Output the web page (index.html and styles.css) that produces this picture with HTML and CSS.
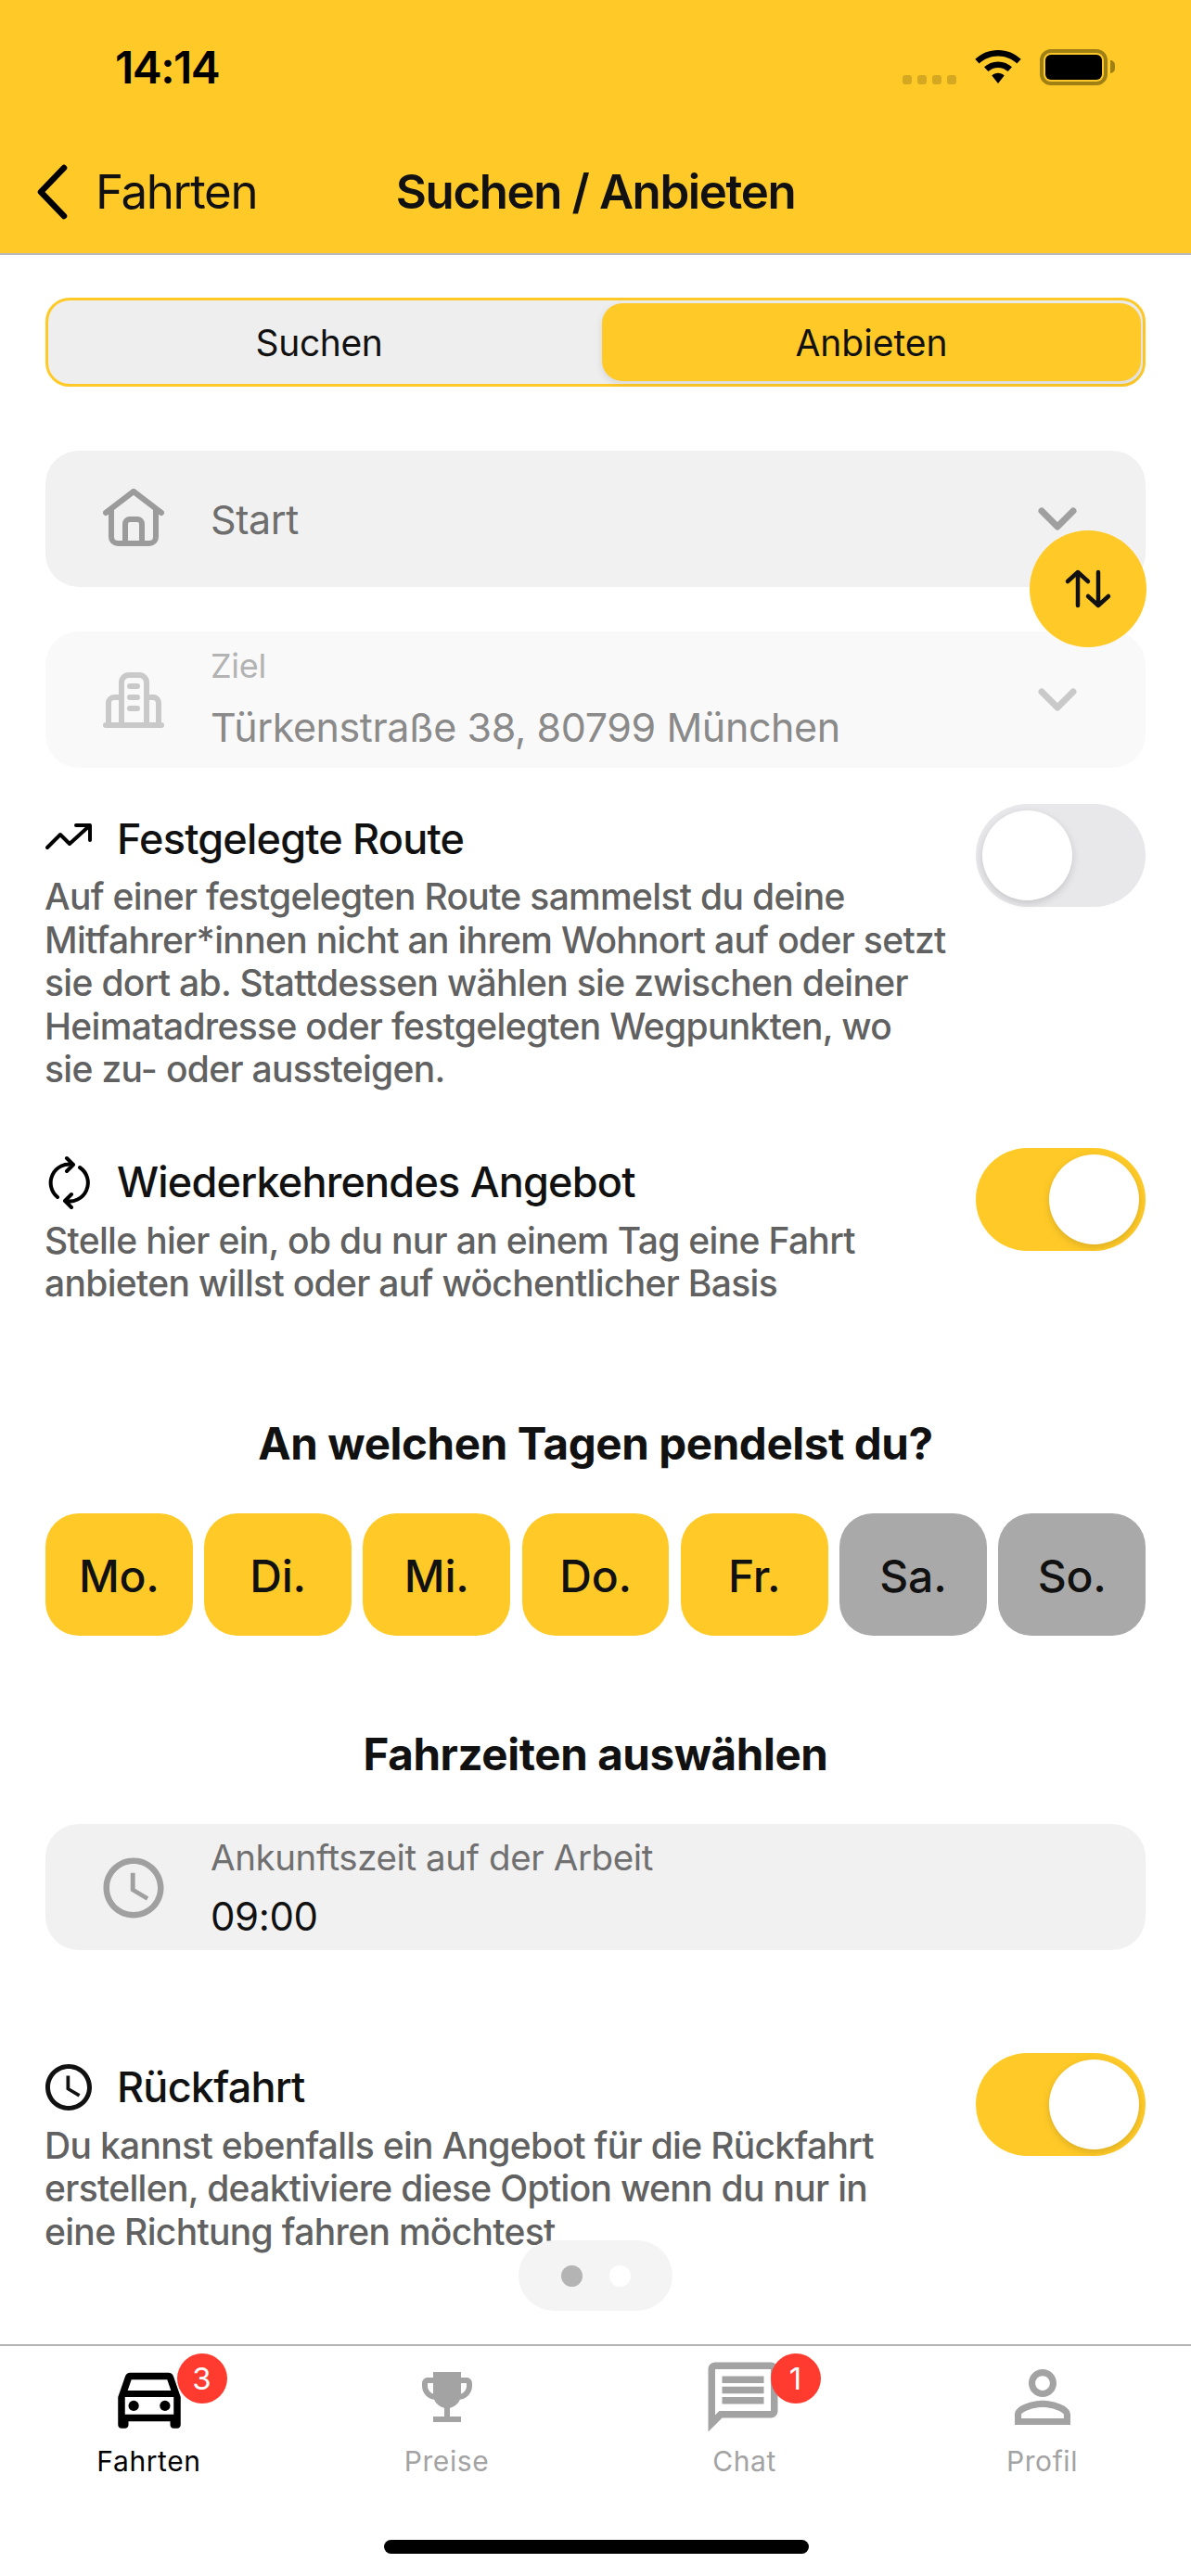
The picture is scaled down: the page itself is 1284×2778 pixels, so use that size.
FILE: index.html
```html
<!DOCTYPE html>
<html lang="de">
<head>
    <meta charset="UTF-8">
    <meta name="viewport" content="width=device-width, initial-scale=1.0">
    <title>Suchen / Anbieten</title>
    <link rel="stylesheet" href="styles.css">
</head>
<body>
    <header class="header">
        <div class="status-bar">
            <span class="clock">14:14</span>
            <div class="status-icons">
                <div class="signal"><i></i><i></i><i></i><i></i></div>
                <svg class="wifi" viewBox="0 0 50 36"><path d="M25 0C15.500 0 6.800 3.700 0.300 9.800L4.600 14.500C9.900 9.500 17.100 6.400 25 6.400S40.100 9.500 45.400 14.500L49.700 9.800C43.200 3.700 34.500 0 25 0ZM25 12.400C19.200 12.400 14 14.700 10 18.300L14.400 23C17.200 20.500 20.900 18.900 25 18.900S32.800 20.500 35.600 23L40 18.300C36 14.700 30.800 12.400 25 12.400ZM25 24.800C22.400 24.800 20.100 25.800 18.300 27.400L25 36L31.700 27.400C29.900 25.800 27.600 24.800 25 24.800Z"/></svg>
                <div class="battery"><div class="battery-level"></div></div>
                <div class="battery-tip"></div>
            </div>
        </div>
        <nav class="nav-bar">
            <div class="nav-back">
                <svg class="chevron-left" viewBox="0 0 36 60"><path d="M31 4 6 30l25 26"/></svg>
                <span>Fahrten</span>
            </div>
            <h1 class="nav-title">Suchen / Anbieten</h1>
        </nav>
    </header>

    <main class="content">
        <div class="segment">
            <div class="segment-item">Suchen</div>
            <div class="segment-item active">Anbieten</div>
        </div>

        <div class="route-fields">
            <div class="field">
                <svg class="field-icon" viewBox="0 0 66 66"><path d="M3 26 33 3l30 23M9 22v30a7 7 0 0 0 7 7h34a7 7 0 0 0 7-7V22M24 59V38a5 5 0 0 1 5-5h8a5 5 0 0 1 5 5v21"/></svg>
                <div class="field-text"><span class="field-value muted">Start</span></div>
                <svg class="chevron-down" viewBox="0 0 42 26"><path d="M4 4l17 17L38 4"/></svg>
            </div>
            <div class="field disabled">
                <svg class="field-icon" viewBox="0 0 66 66"><path d="M3 60h60M20 60V14a8 8 0 0 1 8-8h11a8 8 0 0 1 8 8v46M6 60V36a6 6 0 0 1 6-6h8M47 30h8a6 6 0 0 1 5 6v24M29 18h8M29 30h8M29 42h8"/></svg>
                <div class="field-text">
                    <span class="field-label">Ziel</span>
                    <span class="field-value">Türkenstraße 38, 80799 München</span>
                </div>
                <svg class="chevron-down" viewBox="0 0 42 26"><path d="M4 4l17 17L38 4"/></svg>
            </div>
            <button class="swap-button">
                <svg viewBox="0 0 60 60"><path d="M19 48V12M8 22l11-10 11 10M41 12v36M30 38l11 10 11-10"/></svg>
            </button>
        </div>

        <section class="option first">
            <div class="option-text">
                <div class="option-title">
                    <svg class="line-icon" viewBox="0 0 60 60"><path d="M7 40l14-14 10 10 22-20M38 16h15v16"/></svg>
                    <span>Festgelegte Route</span>
                </div>
                <p>Auf einer festgelegten Route sammelst du deine<br>Mitfahrer*innen nicht an ihrem Wohnort auf oder setzt<br>sie dort ab. Stattdessen wählen sie zwischen deiner<br>Heimatadresse oder festgelegten Wegpunkten, wo<br>sie zu- oder aussteigen.</p>
            </div>
            <div class="toggle"><div class="toggle-knob"></div></div>
        </section>

        <section class="option second">
            <div class="option-text">
                <div class="option-title">
                    <svg class="line-icon" viewBox="0 0 60 60"><path d="M35 11A20 20 0 0 0 18 46M28 4l7 7-7 7M26 50A20 20 0 0 0 42 14M33 43l-7 7 7 7"/></svg>
                    <span>Wiederkehrendes Angebot</span>
                </div>
                <p>Stelle hier ein, ob du nur an einem Tag eine Fahrt<br>anbieten willst oder auf wöchentlicher Basis</p>
            </div>
            <div class="toggle on"><div class="toggle-knob"></div></div>
        </section>

        <h2 class="section-title days-title">An welchen Tagen pendelst du?</h2>
        <div class="days">
            <div class="day">Mo.</div>
            <div class="day">Di.</div>
            <div class="day">Mi.</div>
            <div class="day">Do.</div>
            <div class="day">Fr.</div>
            <div class="day off">Sa.</div>
            <div class="day off">So.</div>
        </div>

        <h2 class="section-title times-title">Fahrzeiten auswählen</h2>
        <div class="field time-field">
            <svg class="clock-icon" viewBox="0 0 24 24"><path d="M11.990 2C6.470 2 2 6.480 2 12s4.470 10 9.990 10C17.520 22 22 17.520 22 12S17.520 2 11.990 2zM12 20c-4.420 0-8-3.580-8-8s3.580-8 8-8 8 3.580 8 8-3.580 8-8 8zm.500-13H11v6l5.250 3.150.750-1.230-4.500-2.670z"/></svg>
            <div class="field-text">
                <span class="time-label">Ankunftszeit auf der Arbeit</span>
                <span class="time-value">09:00</span>
            </div>
        </div>

        <section class="option third">
            <div class="option-text">
                <div class="option-title">
                    <svg viewBox="0 0 24 24"><path d="M11.990 2C6.470 2 2 6.480 2 12s4.470 10 9.990 10C17.520 22 22 17.520 22 12S17.520 2 11.990 2zM12 20c-4.420 0-8-3.580-8-8s3.580-8 8-8 8 3.580 8 8-3.580 8-8 8zm.500-13H11v6l5.250 3.150.750-1.230-4.500-2.670z"/></svg>
                    <span>Rückfahrt</span>
                </div>
                <p>Du kannst ebenfalls ein Angebot für die Rückfahrt<br>erstellen, deaktiviere diese Option wenn du nur in<br>eine Richtung fahren möchtest</p>
            </div>
            <div class="toggle on"><div class="toggle-knob"></div></div>
        </section>

        <div class="pager"><i class="current"></i><i></i></div>
    </main>

    <footer class="tab-bar">
        <div class="tab active">
            <div class="tab-icon">
                <svg class="car" viewBox="0 0 24 24"><path d="M18.920 6.010C18.720 5.420 18.160 5 17.500 5h-11c-.660 0-1.210.420-1.420 1.010L3 12v8c0 .550.450 1 1 1h1c.550 0 1-.450 1-1v-1h12v1c0 .550.450 1 1 1h1c.550 0 1-.450 1-1v-8l-2.080-5.990zM6.850 7h10.290l1.080 3.110H5.770L6.850 7zM19 17H5v-5h14v5z"/><circle cx="7.500" cy="14.500" r="1.500"/><circle cx="16.500" cy="14.500" r="1.500"/></svg>
                <span class="badge">3</span>
            </div>
            <span>Fahrten</span>
        </div>
        <div class="tab">
            <div class="tab-icon">
                <svg class="trophy" viewBox="0 0 24 24"><path d="M19 5h-2V3H7v2H5c-1.100 0-2 .900-2 2v1c0 2.550 1.920 4.630 4.390 4.940.630 1.500 1.980 2.630 3.610 2.960V19H7v2h10v-2h-4v-3.100c1.630-.330 2.980-1.460 3.610-2.960C19.080 12.630 21 10.550 21 8V7c0-1.100-.900-2-2-2zM5 8V7h2v3.820C5.840 10.400 5 9.300 5 8zm14 0c0 1.300-.840 2.400-2 2.820V7h2v1z"/></svg>
            </div>
            <span>Preise</span>
        </div>
        <div class="tab">
            <div class="tab-icon">
                <svg class="chat" viewBox="0 0 24 24"><path d="M20 2H4c-1.100 0-2 .900-2 2v18l4-4h14c1.100 0 2-.900 2-2V4c0-1.100-.900-2-2-2zm0 14H5.170L4 17.170V4h16v12zM6 12h12v2H6zm0-3h12v2H6zm0-3h12v2H6z"/></svg>
                <span class="badge chat-badge">1</span>
            </div>
            <span>Chat</span>
        </div>
        <div class="tab">
            <div class="tab-icon">
                <svg viewBox="0 0 24 24"><path d="M12 5.900c1.160 0 2.100.940 2.100 2.100s-.940 2.100-2.100 2.100S9.900 9.160 9.900 8s.940-2.100 2.100-2.100m0 9c2.970 0 6.100 1.460 6.100 2.100v1.100H5.900V17c0-.640 3.130-2.100 6.100-2.100M12 4C9.790 4 8 5.790 8 8s1.790 4 4 4 4-1.790 4-4-1.790-4-4-4zm0 9c-2.670 0-8 1.340-8 4v3h16v-3c0-2.660-5.330-4-8-4z"/></svg>
            </div>
            <span>Profil</span>
        </div>
        <div class="home-bar"></div>
    </footer>
</body>
</html>
```
FILE: styles.css
```css
body {
    font-family: Inter, "Liberation Sans", sans-serif;
    background-color: #fff;
    color: #111;
    margin: 0;
    padding: 0;
    width: 1284px;
    height: 2778px;
    display: flex;
    flex-direction: column;
    overflow: hidden;
}
h1, h2, p {
    margin: 0;
}

/* header */
.header {
    height: 273px;
    flex: none;
    background-color: #ffca28;
    border-bottom: 2px solid #b9b9b9;
}
.status-bar {
    height: 144px;
    display: flex;
    align-items: center;
    justify-content: space-between;
}
.clock {
    margin-left: 124px;
    font-size: 48px;
    font-weight: 600;
    letter-spacing: -1.5px;
    color: #000;
}
.status-icons {
    display: flex;
    align-items: center;
    margin-right: 82px;
}
.signal {
    display: flex;
    gap: 6px;
    margin-top: 28px;
    margin-right: 20px;
}
.signal i {
    width: 10px;
    height: 10px;
    border-radius: 3px;
    background-color: rgba(0, 0, 0, 0.17);
}
.wifi {
    width: 50px;
    height: 36px;
    margin-right: 20px;
}
.battery {
    width: 73px;
    height: 39px;
    box-sizing: border-box;
    border: 4px solid #a07f14;
    border-radius: 12px;
    padding: 2px;
}
.battery-level {
    width: 100%;
    height: 100%;
    background-color: #000;
    border-radius: 6px;
}
.battery-tip {
    width: 5px;
    height: 14px;
    margin-left: 3px;
    background-color: #a07f14;
    border-radius: 0 7px 7px 0;
}
.nav-bar {
    height: 129px;
    position: relative;
    display: flex;
    align-items: center;
    justify-content: center;
}
.nav-back {
    position: absolute;
    left: 38px;
    top: 32px;
    display: flex;
    align-items: center;
    font-size: 51px;
    letter-spacing: -1.35px;
}
.chevron-left {
    width: 36px;
    height: 60px;
    margin-right: 29px;
    fill: none;
    stroke: #000;
    stroke-width: 6.5;
    stroke-linecap: round;
    stroke-linejoin: round;
}
.nav-title {
    font-size: 51px;
    font-weight: 600;
    letter-spacing: -1.4px;
    margin-top: -5px;
}

/* main content */
.content {
    flex: 1;
    position: relative;
    overflow: hidden;
    padding: 0 49px;
}
.segment {
    margin-top: 46px;
    height: 96px;
    box-sizing: border-box;
    display: flex;
    border: 3px solid #ffca28;
    border-radius: 26px;
    background-color: #eee;
    padding: 3px 2px;
}
.segment-item {
    flex: 1;
    display: flex;
    align-items: center;
    justify-content: center;
    font-size: 39px;
    letter-spacing: -0.4px;
    border-radius: 22px;
    padding-right: 15px;
}
.segment-item.active {
    flex: none;
    width: 581px;
    padding-right: 0;
    letter-spacing: 0;
    background-color: #ffca28;
    box-shadow: 0 3px 8px rgba(0, 0, 0, 0.1);
}

.route-fields {
    position: relative;
    margin-top: 69px;
    display: flex;
    flex-direction: column;
    gap: 48px;
}
.field {
    height: 147px;
    display: flex;
    align-items: center;
    background-color: #f1f1f1;
    border-radius: 36px;
    padding: 0 74px 0 62px;
}
.field.disabled {
    background-color: #f9f9f9;
}
.field-icon {
    width: 66px;
    height: 66px;
    flex: none;
    fill: none;
    stroke: #9b9b9b;
    stroke-width: 6;
    stroke-linecap: round;
    stroke-linejoin: round;
}
.disabled .field-icon {
    stroke: #c9c9c9;
}
.field-text {
    flex: 1;
    margin-left: 50px;
    display: flex;
    flex-direction: column;
}
.field-value {
    font-size: 43px;
    letter-spacing: -0.4px;
    color: #8a8a8a;
}
.field-value.muted {
    color: #6e6e6e;
}
.field-label {
    font-size: 36px;
    color: #b3b3b3;
    margin-top: -4px;
    margin-bottom: 18px;
    letter-spacing: -0.3px;
}
.chevron-down {
    width: 42px;
    height: 26px;
    flex: none;
    fill: none;
    stroke: #a0a0a0;
    stroke-width: 7;
    stroke-linecap: round;
    stroke-linejoin: round;
}
.disabled .chevron-down {
    stroke: #c9c9c9;
}
.swap-button {
    position: absolute;
    right: -1px;
    top: 86px;
    width: 126px;
    height: 126px;
    padding: 33px;
    border: none;
    border-radius: 50%;
    background-color: #ffca28;
}
.swap-button svg {
    display: block;
    width: 60px;
    height: 60px;
    fill: none;
    stroke: #111;
    stroke-width: 4.5;
    stroke-linecap: round;
    stroke-linejoin: round;
}

/* option rows */
.option {
    display: flex;
    justify-content: space-between;
    align-items: flex-start;
}
.option.first {
    margin-top: 39px;
}
.option.second {
    margin-top: 61px;
}
.option.third {
    margin-top: 111px;
}
.option-text {
    padding-top: 9px;
}
.option-title {
    display: flex;
    align-items: center;
    height: 56px;
    font-size: 45px;
    font-weight: 500;
    letter-spacing: -0.8px;
    margin-bottom: 12px;
}
.option-title svg {
    width: 60px;
    height: 60px;
    margin-left: -5px;
    margin-right: 22px;
    fill: #111;
    flex: none;
}
.option-title .line-icon {
    fill: none;
    stroke: #000;
    stroke-width: 4;
    stroke-linecap: round;
    stroke-linejoin: round;
}
.option p {
    font-size: 39px;
    line-height: 46.5px;
    font-weight: 500;
    letter-spacing: -0.68px;
    color: #616161;
    margin-left: -1px;
}
.toggle {
    width: 183px;
    height: 111px;
    box-sizing: border-box;
    flex: none;
    padding: 7px;
    border-radius: 56px;
    background-color: #e8e8ea;
}
.toggle.on {
    background-color: #ffca28;
}
.toggle-knob {
    width: 97px;
    height: 97px;
    background-color: #fff;
    border-radius: 50%;
    box-shadow: 0 3px 8px rgba(0, 0, 0, 0.15);
}
.toggle.on .toggle-knob {
    margin-left: auto;
}

.section-title {
    font-size: 47.5px;
    line-height: 60px;
    font-weight: 700;
    letter-spacing: -0.4px;
    text-align: center;
}
.days-title {
    margin-top: 119px;
}
.times-title {
    margin-top: 98px;
}
.days {
    margin-top: 45px;
    display: grid;
    grid-template-columns: repeat(7, 1fr);
    gap: 12.500px;
}
.day {
    height: 132px;
    box-sizing: border-box;
    padding-top: 3px;
    display: flex;
    align-items: center;
    justify-content: center;
    background-color: #ffca28;
    border-radius: 36px;
    font-size: 48px;
    font-weight: 550;
    letter-spacing: -0.2px;
}
.day.off {
    background-color: #a9a9a9;
}
.time-field {
    margin-top: 45px;
    height: 136px;
}
.clock-icon {
    width: 78px;
    height: 78px;
    margin: 0 -6px -2px -6px;
    flex: none;
    fill: #a0a0a0;
}
.time-label {
    font-size: 38.5px;
    letter-spacing: -0.4px;
    color: #707070;
    margin-top: 2px;
    margin-bottom: 15px;
}
.time-value {
    font-size: 42px;
    letter-spacing: -0.4px;
    color: #111;
}

.pager {
    position: absolute;
    left: 559px;
    top: 2141px;
    width: 166px;
    height: 76px;
    display: flex;
    align-items: center;
    justify-content: center;
    gap: 29px;
    background-color: #f4f4f4;
    border-radius: 38px;
}
.pager i {
    width: 23px;
    height: 23px;
    border-radius: 50%;
    background-color: #fff;
}
.pager i.current {
    background-color: #b4b4b4;
}

/* tab bar */
.tab-bar {
    height: 250px;
    flex: none;
    box-sizing: border-box;
    position: relative;
    display: grid;
    grid-template-columns: repeat(4, 1fr);
    border-top: 2px solid #b4b4b4;
    color: #a3a3a3;
}
.tab {
    display: flex;
    flex-direction: column;
    align-items: center;
    font-size: 30px;
    letter-spacing: 0.6px;
    padding-top: 10px;
}
.tab.active {
    color: #000;
}
.tab-icon {
    position: relative;
    width: 90px;
    height: 90px;
    margin-bottom: 6px;
    display: flex;
    align-items: center;
    justify-content: center;
}
.tab-icon svg {
    width: 90px;
    height: 90px;
    fill: #a3a3a3;
}
.tab-icon .trophy {
    width: 72px;
    height: 72px;
}
.tab-icon .car {
    fill: #000;
}
.tab-icon .chat {
    margin-left: -4px;
}
.badge {
    position: absolute;
    left: 75px;
    top: -2px;
    width: 54px;
    height: 54px;
    display: flex;
    align-items: center;
    justify-content: center;
    border-radius: 50%;
    background-color: #ff3b30;
    color: #fff;
    font-size: 33px;
    letter-spacing: 0;
}
.chat-badge {
    left: 73px;
}
.home-bar {
    position: absolute;
    left: 414px;
    top: 209px;
    width: 458px;
    height: 15px;
    border-radius: 8px;
    background-color: #000;
}
```
